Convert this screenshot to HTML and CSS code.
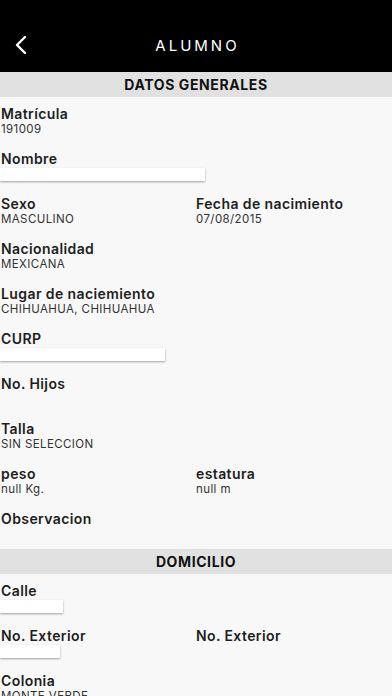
FILE: index.html
```html
<!DOCTYPE html>
<html lang="es">
<head>
    <meta charset="UTF-8">
    <meta name="viewport" content="width=device-width, initial-scale=1.0">
    <title>Alumno</title>
    <link rel="stylesheet" href="styles.css">
</head>
<body>
    <header class="barra">
        <button class="regresar" aria-label="Regresar">
            <svg width="14" height="20" viewBox="0 0 14 20">
                <path d="M11 2 L3 10 L11 18" fill="none" stroke="#fff" stroke-width="2.4" stroke-linecap="round" stroke-linejoin="round"/>
            </svg>
        </button>
        <h1>ALUMNO</h1>
    </header>

    <!-- Datos generales -->
    <div class="seccion-titulo">DATOS GENERALES</div>
    <div class="seccion">
        <div class="campo">
            <p class="etiqueta">Matrícula</p>
            <p class="valor">191009</p>
        </div>
        <div class="campo">
            <p class="etiqueta">Nombre</p>
            <div class="caja caja-nombre"></div>
        </div>
        <div class="fila">
            <div class="campo">
                <p class="etiqueta">Sexo</p>
                <p class="valor">MASCULINO</p>
            </div>
            <div class="campo">
                <p class="etiqueta">Fecha de nacimiento</p>
                <p class="valor">07/08/2015</p>
            </div>
        </div>
        <div class="campo">
            <p class="etiqueta">Nacionalidad</p>
            <p class="valor">MEXICANA</p>
        </div>
        <div class="campo">
            <p class="etiqueta">Lugar de naciemiento</p>
            <p class="valor">CHIHUAHUA, CHIHUAHUA</p>
        </div>
        <div class="campo">
            <p class="etiqueta">CURP</p>
            <div class="caja caja-curp"></div>
        </div>
        <div class="campo">
            <p class="etiqueta">No. Hijos</p>
            <p class="valor"></p>
        </div>
        <div class="campo">
            <p class="etiqueta">Talla</p>
            <p class="valor">SIN SELECCION</p>
        </div>
        <div class="fila">
            <div class="campo">
                <p class="etiqueta">peso</p>
                <p class="valor">null Kg.</p>
            </div>
            <div class="campo">
                <p class="etiqueta">estatura</p>
                <p class="valor">null m</p>
            </div>
        </div>
        <div class="campo">
            <p class="etiqueta">Observacion</p>
            <p class="valor"></p>
        </div>
    </div>

    <!-- Domicilio -->
    <div class="seccion-titulo">DOMICILIO</div>
    <div class="seccion">
        <div class="campo">
            <p class="etiqueta">Calle</p>
            <div class="caja caja-calle"></div>
        </div>
        <div class="fila">
            <div class="campo">
                <p class="etiqueta">No. Exterior</p>
                <div class="caja caja-numero"></div>
            </div>
            <div class="campo">
                <p class="etiqueta">No. Exterior</p>
                <p class="valor"></p>
            </div>
        </div>
        <div class="campo">
            <p class="etiqueta">Colonia</p>
            <p class="valor">MONTE VERDE</p>
        </div>
    </div>
</body>
</html>
```

FILE: styles.css
```css
* {
    margin: 0;
    padding: 0;
    box-sizing: border-box;
}

body {
    font-family: 'Inter', 'Roboto', sans-serif;
    background-color: #f8f8f8;
    color: #222;
    width: 392px;
    overflow: hidden;
}

.barra {
    background-color: #000;
    height: 72px;
    padding-top: 18px;
    display: flex;
    align-items: center;
    justify-content: center;
    position: relative;
}

.barra h1 {
    color: #fff;
    font-size: 15px;
    font-weight: 400;
    letter-spacing: 3px;
    margin-right: -3px;
}

.regresar {
    position: absolute;
    left: 14px;
    top: 35px;
    background: none;
    border: none;
    width: 14px;
    height: 20px;
}

.regresar svg {
    display: block;
}

.seccion-titulo {
    background-color: #e1e1e1;
    height: 25px;
    line-height: 25px;
    text-align: center;
    font-size: 14px;
    font-weight: 700;
    letter-spacing: 0.6px;
    color: #111;
}

.seccion {
    padding: 8px 0 8px 1px;
}

.fila {
    display: grid;
    grid-template-columns: 195px 1fr;
}

.campo {
    margin-bottom: 14px;
}

.seccion > .campo:last-child,
.seccion > .fila:last-child .campo {
    margin-bottom: 0;
}

.etiqueta {
    font-size: 14px;
    line-height: 17px;
    font-weight: 600;
    letter-spacing: 0.4px;
    color: #1e1e1e;
}

.valor {
    font-size: 11.5px;
    line-height: 14px;
    letter-spacing: 0.4px;
    color: #333;
    height: 14px;
}

.caja {
    background-color: #fff;
    height: 13px;
    margin-top: 1px;
    box-shadow: 0 1px 2px rgba(0, 0, 0, 0.35);
}

.caja-nombre {
    width: 205px;
    margin-left: -1px;
}

.caja-curp {
    width: 165px;
    margin-left: -1px;
}

.caja-calle {
    width: 63px;
    margin-left: -1px;
}

.caja-numero {
    width: 60px;
    margin-left: -1px;
}
```
